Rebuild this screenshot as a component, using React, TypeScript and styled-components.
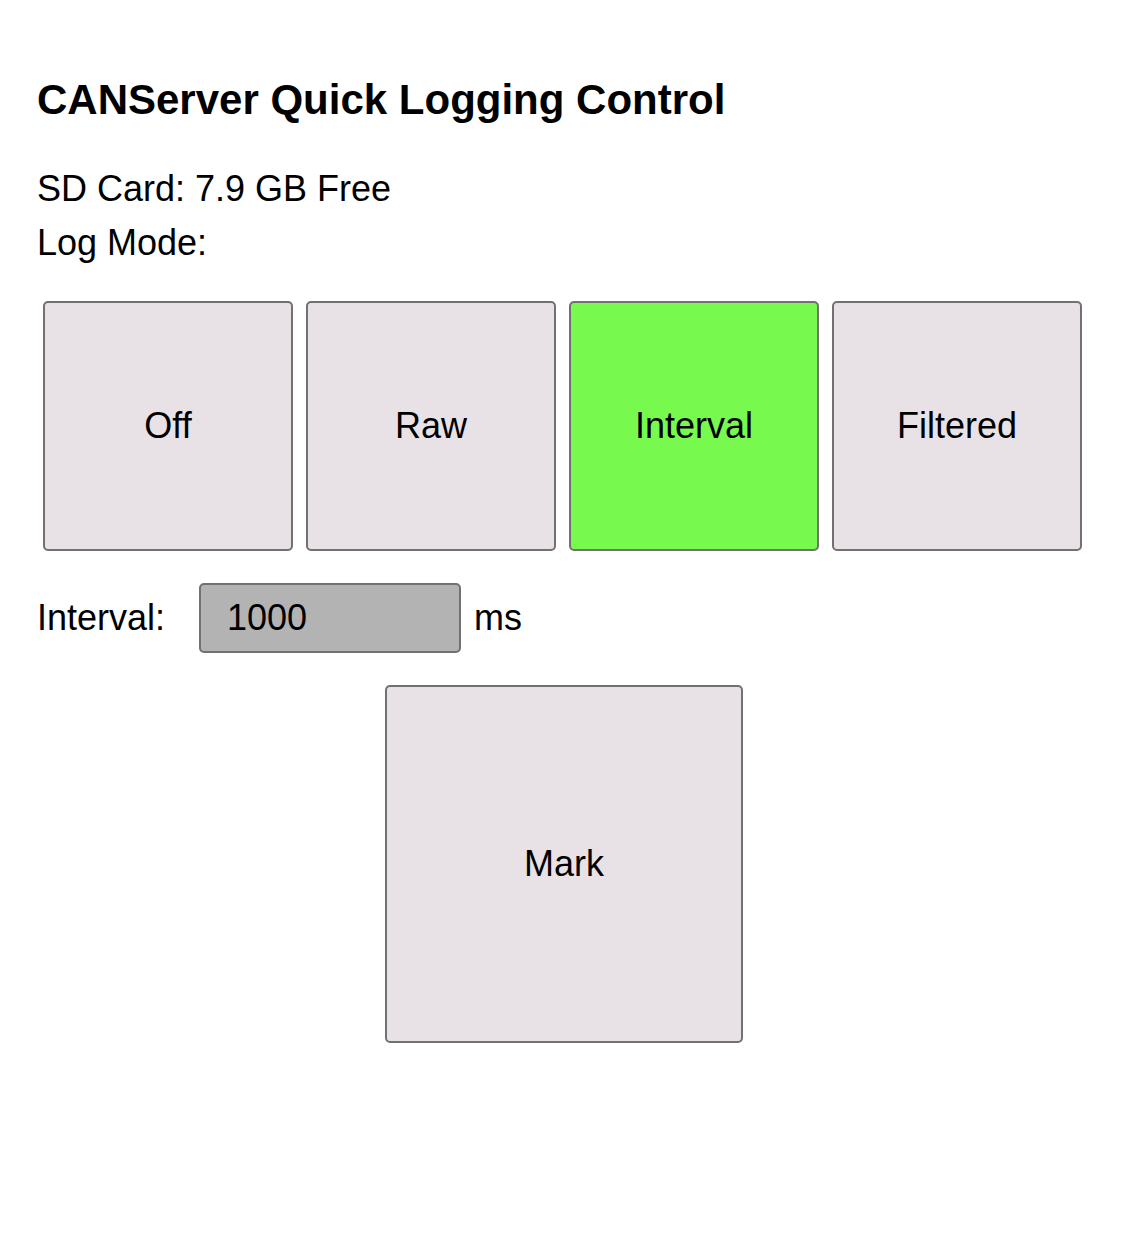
import React, { useState } from 'react';
import styled, { createGlobalStyle } from 'styled-components';

const GlobalStyle = createGlobalStyle`
  html, body {
    margin: 0;
    padding: 0;
    background: #ffffff;
  }
  body {
    font-family: "Liberation Sans", Arial, Helvetica, sans-serif;
    color: #000000;
  }
`;

const Page = styled.div`
  padding: 79px 0 120px 37px;
  width: 1125px;
  box-sizing: border-box;
`;

const Title = styled.h3`
  margin: 0 0 50px;
  font-size: 42px;
  line-height: 1;
  font-weight: bold;
`;

const InfoLine = styled.div`
  font-size: 36px;
  line-height: 1;
  & + & {
    margin-top: 18px;
  }
`;

const ModeRow = styled.div`
  display: flex;
  gap: 13px;
  margin: 40px 0 0 6px;
`;

const ModeButton = styled.button<{ active?: boolean; size: number }>`
  width: ${p => p.size}px;
  height: ${p => p.size}px;
  box-sizing: border-box;
  border: 2px solid #737073;
  border-radius: 5px;
  background: ${p => (p.active ? '#77f94e' : '#e8e2e6')};
  font-family: "Liberation Sans", Arial, sans-serif;
  font-size: 36px;
  color: #000000;
  display: flex;
  align-items: center;
  justify-content: center;
  padding: 0;
  cursor: pointer;
`;

const IntervalRow = styled.div`
  display: flex;
  align-items: center;
  margin-top: 32px;
  font-size: 36px;
`;

const FieldLabel = styled.span`
  width: 162px;
`;

const IntervalInput = styled.input`
  width: 262px;
  height: 70px;
  box-sizing: border-box;
  border: 2px solid #737073;
  border-radius: 5px;
  background: #b3b3b3;
  padding: 0 0 0 26px;
  font-family: "Liberation Sans", Arial, sans-serif;
  font-size: 36px;
  color: #000000;
  outline: none;
`;

const Unit = styled.span`
  margin-left: 13px;
`;

const MarkRow = styled.div`
  display: flex;
  justify-content: center;
  margin: 32px 0 0 -34px;
`;

const MODES = ['Off', 'Raw', 'Interval', 'Filtered'];

export default function App() {
  const [mode, setMode] = useState('Interval');
  const [interval, setInterval] = useState('1000');

  return (
    <Page>
      <GlobalStyle />
      <Title>CANServer Quick Logging Control</Title>
      <InfoLine>SD Card: 7.9 GB Free</InfoLine>
      <InfoLine>Log Mode:</InfoLine>
      <ModeRow>
        {MODES.map(m => (
          <ModeButton key={m} size={250} active={mode === m} onClick={() => setMode(m)}>
            {m}
          </ModeButton>
        ))}
      </ModeRow>
      <IntervalRow>
        <FieldLabel>Interval:</FieldLabel>
        <IntervalInput value={interval} onChange={e => setInterval(e.target.value)} />
        <Unit>ms</Unit>
      </IntervalRow>
      <MarkRow>
        <ModeButton size={358}>Mark</ModeButton>
      </MarkRow>
    </Page>
  );
}
